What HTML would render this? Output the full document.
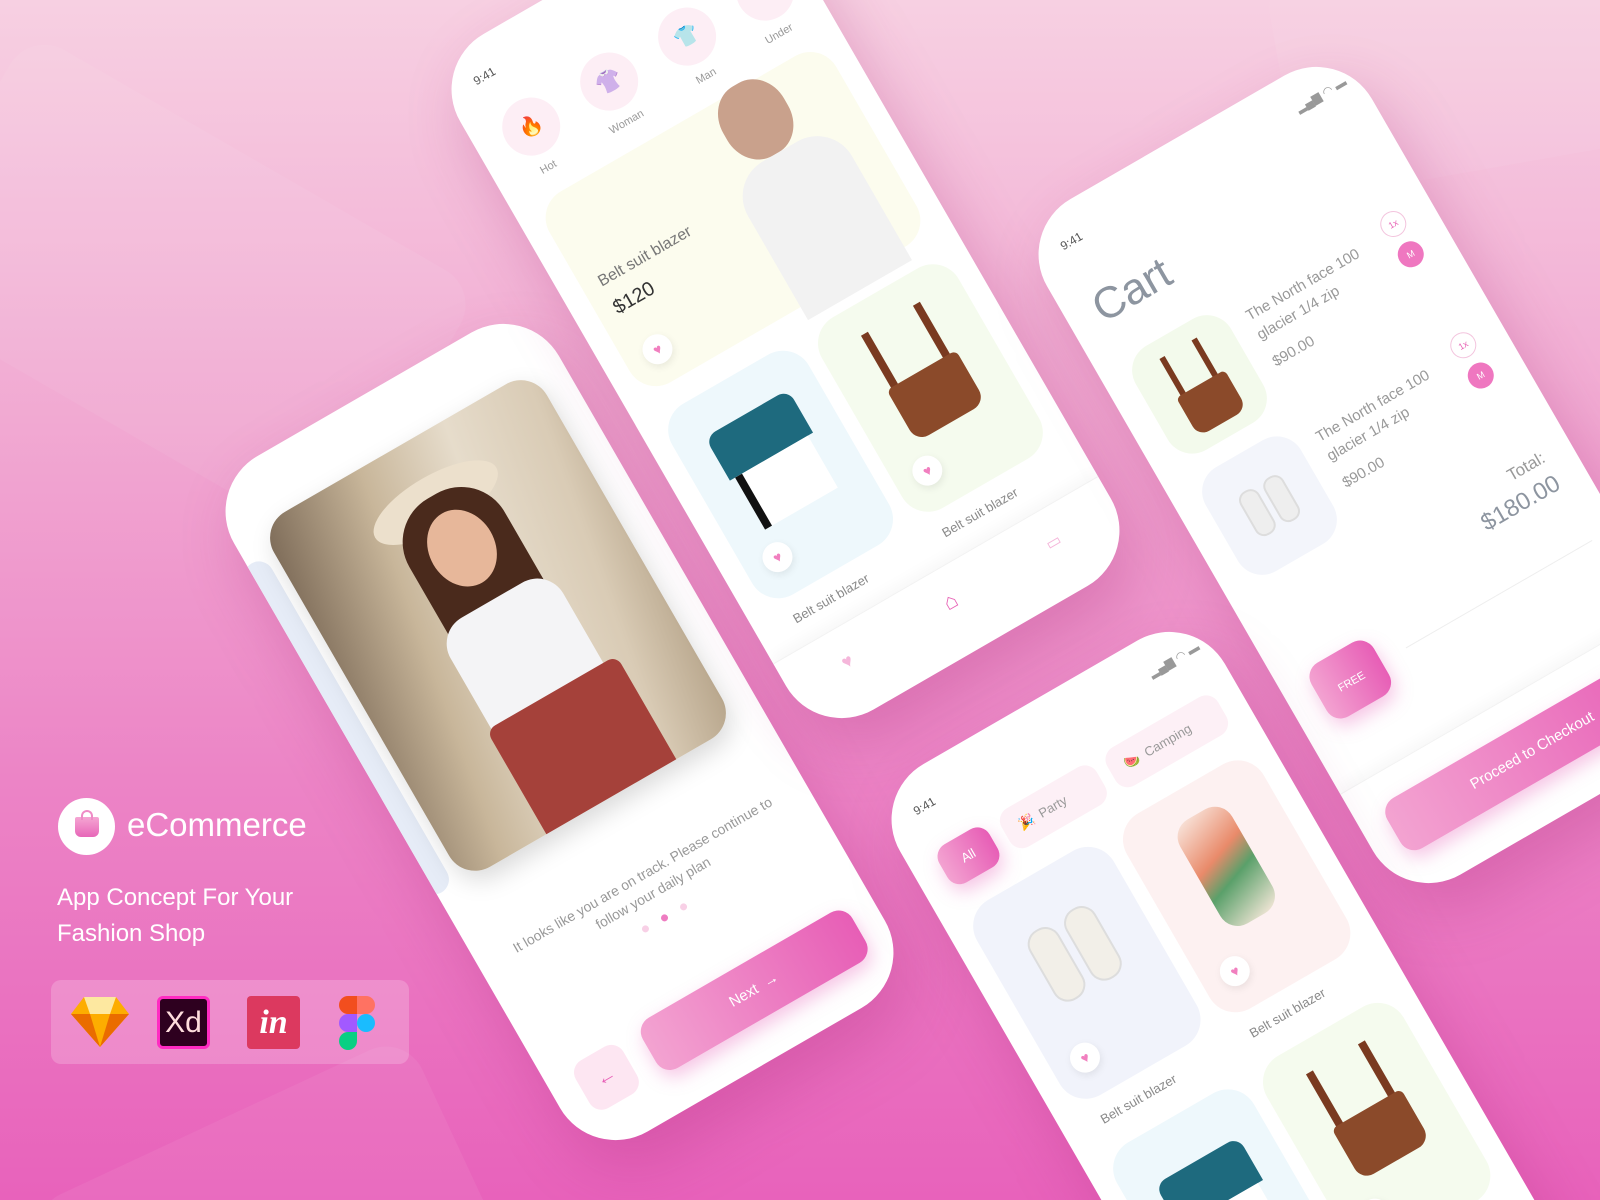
<!DOCTYPE html>
<html><head><meta charset="utf-8">
<style>
*{margin:0;padding:0;box-sizing:border-box}
html,body{width:1600px;height:1200px;overflow:hidden}
body{font-family:"Liberation Sans","DejaVu Sans",sans-serif}
#frame{position:relative;width:1600px;height:1200px;overflow:hidden;
background:linear-gradient(180deg,#f7d0e2 0%,#f1a9d2 35%,#ec84c6 65%,#e862bb 100%)}
.hex{position:absolute;background:rgba(255,255,255,.06);border-radius:40px}
.phone{position:absolute;width:375px;height:780px;background:#fff;border-radius:64px;transform:rotate(-30deg);
box-shadow:0 30px 60px rgba(170,40,120,.28);overflow:hidden}
.phone *{position:absolute}
.t941{left:32px;top:30px;font-size:12px;color:#555}
.pinkbtn{background:linear-gradient(90deg,#f3a3d1,#e75eb6);border-radius:16px;color:#fff;box-shadow:0 8px 18px rgba(230,90,180,.35)}
.heart{width:30px;height:30px;border-radius:50%;background:#fff;box-shadow:0 3px 8px rgba(0,0,0,.08);color:#f17fbf;font-size:14px;text-align:center;line-height:30px}
.lbl{font-size:13px;color:#8a8a8a}
</style></head><body><div id="frame">
<div class="hex" style="left:-80px;top:140px;width:520px;height:300px;transform:rotate(30deg)"></div>
<div class="hex" style="left:1280px;top:-60px;width:380px;height:230px;transform:rotate(-10deg)"></div>
<div class="hex" style="left:60px;top:1110px;width:420px;height:260px;transform:rotate(-25deg)"></div>

<div style="position:absolute;left:58px;top:798px;width:57px;height:57px;border-radius:50%;background:#fff"></div>
<div style="position:absolute;left:75px;top:817px;width:24px;height:20px;background:linear-gradient(#f5a6d3,#e766b8);border-radius:2px 2px 6px 6px"></div>
<div style="position:absolute;left:81px;top:810px;width:12px;height:10px;border:2px solid #ef8bc6;border-bottom:none;border-radius:6px 6px 0 0"></div>
<div style="position:absolute;left:127px;top:806px;font-size:33px;color:#fff">eCommerce</div>
<div style="position:absolute;left:57px;top:880px;font-size:24px;color:#fff;line-height:36px">App Concept For Your<br>Fashion Shop</div>
<div style="position:absolute;left:51px;top:980px;width:358px;height:84px;border-radius:10px;background:rgba(255,255,255,.2)"></div>
<svg style="position:absolute;left:70px;top:995px" width="60" height="54" viewBox="0 0 60 54"><polygon points="14,2 46,2 59,19 30,52 1,19" fill="#fdad00"/><polygon points="14,2 46,2 40,19 20,19" fill="#fde8a0"/><polygon points="1,19 20,19 30,52" fill="#ea6c00"/><polygon points="59,19 40,19 30,52" fill="#ea6c00"/></svg>
<div style="position:absolute;left:157px;top:996px;width:53px;height:53px;border-radius:6px;background:#2e001f;border:3px solid #ff2bc2;color:#fdd;font-size:30px;text-align:center;line-height:47px">Xd</div>
<div style="position:absolute;left:247px;top:996px;width:53px;height:53px;border-radius:4px;background:#dc395f;color:#fff;font:italic bold 34px 'Liberation Serif',serif;text-align:center;line-height:53px">in</div>
<svg style="position:absolute;left:339px;top:996px" width="36" height="54" viewBox="0 0 36 54"><path d="M9 0h9v18H9a9 9 0 0 1 0-18z" fill="#f24e1e"/><path d="M18 0h9a9 9 0 0 1 0 18h-9z" fill="#ff7262"/><path d="M9 18h9v18H9a9 9 0 0 1 0-18z" fill="#a259ff"/><circle cx="27" cy="27" r="9" fill="#1abcfe"/><path d="M9 36h9v9a9 9 0 1 1-9-9z" fill="#0acf83"/></svg>

<div class="phone" style="left:372px;top:342px">
  <div style="left:-10px;top:90px;width:30px;height:380px;background:#e6ecf7;border-radius:20px"></div>
  <div style="left:30px;top:62px;width:315px;height:410px;border-radius:30px;overflow:hidden;background:linear-gradient(100deg,#7d6b58 0%,#c8b69a 30%,#e6dccb 55%,#d9cbb5 80%,#b7a58b 100%);box-shadow:0 10px 25px rgba(0,0,0,.15)">
    <div style="left:95px;top:40px;width:140px;height:55px;border-radius:50%;background:#ece0cc"></div>
    <div style="left:110px;top:60px;width:110px;height:260px;border-radius:50px;background:#4a2a1c"></div>
    <div style="left:132px;top:80px;width:66px;height:80px;border-radius:50%;background:#e7b79a"></div>
    <div style="left:100px;top:180px;width:130px;height:120px;border-radius:30px 30px 10px 10px;background:#f4f4f6"></div>
    <div style="left:95px;top:290px;width:150px;height:130px;background:#a5413a;border-radius:10px"></div>
  </div>
  <div style="left:38px;top:545px;width:300px;text-align:center;font-size:14px;line-height:21px;color:#999">It looks like you are on track. Please continue to follow your daily plan</div>
  <div style="left:160px;top:600px;width:7px;height:7px;border-radius:50%;background:#f8d0e6"></div>
  <div style="left:182px;top:600px;width:7px;height:7px;border-radius:50%;background:#ee7cc1"></div>
  <div style="left:204px;top:600px;width:7px;height:7px;border-radius:50%;background:#f8d0e6"></div>
  <div style="left:28px;top:685px;width:55px;height:55px;border-radius:14px;background:#fde6f2;color:#e75eb6;font-size:20px;text-align:center;line-height:55px">←</div>
  <div class="pinkbtn" style="left:106px;top:682px;width:242px;height:58px;font-size:15px;text-align:center;line-height:58px">Next &nbsp;→</div>
</div>

<div class="phone" style="left:598px;top:-80px">
  <div class="t941">9:41</div>
  <div style="left:30px;top:75px;width:58px;height:58px;border-radius:50%;background:#fdeef5;text-align:center;line-height:58px;font-size:20px">🔥</div>
  <div style="left:45px;top:142px;font-size:11px;color:#999">Hot</div>
  <div style="left:120px;top:75px;width:58px;height:58px;border-radius:50%;background:#fdeef5;color:#e880c8;text-align:center;line-height:58px;font-size:22px">👚</div>
  <div style="left:125px;top:142px;font-size:11px;color:#999">Woman</div>
  <div style="left:210px;top:75px;width:58px;height:58px;border-radius:50%;background:#fdeef5;text-align:center;line-height:58px;font-size:20px">👕</div>
  <div style="left:225px;top:142px;font-size:11px;color:#999">Man</div>
  <div style="left:300px;top:75px;width:58px;height:58px;border-radius:50%;background:#fdeef5"></div>
  <div style="left:305px;top:142px;font-size:11px;color:#999">Under</div>
  <div style="left:22px;top:175px;width:331px;height:220px;border-radius:30px;background:#fcfcee">
    <div style="left:18px;top:90px;font-size:16px;color:#777">Belt suit blazer</div>
    <div style="left:18px;top:118px;font-size:20px;color:#333">$120</div>
    <div class="heart" style="left:20px;top:170px">♥</div>
    <div style="left:200px;top:-5px;width:70px;height:80px;border-radius:45%;background:#c9a18c"></div>
    <div style="left:180px;top:75px;width:120px;height:160px;border-radius:40px 40px 0 0;background:#f2f2f2"></div>
  </div>
  <div style="left:22px;top:420px;width:158px;height:220px;border-radius:30px;background:#eef8fc">
    <div style="left:32px;top:40px;width:96px;height:50px;background:#1e6a7e;border-radius:12px 12px 0 0"></div>
    <div style="left:38px;top:90px;width:84px;height:60px;background:#fff;border-left:8px solid #111"></div>
    <div class="heart" style="left:20px;top:165px">♥</div>
  </div>
  <div style="left:195px;top:420px;width:158px;height:220px;border-radius:30px;background:#f5fbee">
    <div style="left:45px;top:30px;width:8px;height:70px;background:#7a3a20"></div>
    <div style="left:105px;top:30px;width:8px;height:70px;background:#7a3a20"></div>
    <div style="left:40px;top:90px;width:80px;height:60px;background:#8b4a2a;border-radius:6px 6px 14px 14px"></div>
    <div class="heart" style="left:20px;top:165px">♥</div>
  </div>
  <div class="lbl" style="left:40px;top:655px">Belt suit blazer</div>
  <div class="lbl" style="left:212px;top:655px">Belt suit blazer</div>
  <div style="left:0;top:690px;width:375px;height:90px;border-top:1px solid #f2f2f2;box-shadow:0 -6px 14px rgba(0,0,0,.03)"></div>
  <div style="left:60px;top:715px;color:#f5b6da;font-size:18px">♥</div>
  <div style="left:178px;top:712px;color:#e864b6;font-size:22px">⌂</div>
  <div style="left:296px;top:715px;color:#f5b6da;font-size:16px">▭</div>
</div>

<div class="phone" style="left:1185px;top:85px">
  <div class="t941">9:41</div>
  <div style="left:305px;top:28px;font-size:12px;color:#999">▂▄▆ ◠ ▬</div>
  <div style="left:30px;top:85px;font-size:44px;color:#8d95a0;font-weight:300">Cart</div>
  <div style="left:28px;top:165px;width:110px;height:120px;border-radius:28px;background:#f3faec">
    <div style="left:33px;top:18px;width:6px;height:50px;background:#7a3a20"></div>
    <div style="left:70px;top:18px;width:6px;height:50px;background:#7a3a20"></div>
    <div style="left:28px;top:60px;width:56px;height:45px;background:#8b4a2a;border-radius:5px 5px 12px 12px"></div>
  </div>
  <div style="left:158px;top:180px;font-size:15px;line-height:22px;color:#999;width:150px">The North face 100 glacier 1/4 zip</div>
  <div style="left:158px;top:235px;font-size:15px;color:#999">$90.00</div>
  <div style="left:318px;top:170px;width:26px;height:26px;border-radius:50%;border:1px solid #f3c5de;font-size:9px;color:#e864b6;text-align:center;line-height:24px">1x</div>
  <div style="left:318px;top:205px;width:26px;height:26px;border-radius:50%;background:#ef77c0;font-size:9px;color:#fff;text-align:center;line-height:26px">M</div>
  <div style="left:28px;top:305px;width:110px;height:120px;border-radius:28px;background:#f3f5fb">
    <div style="left:30px;top:35px;width:22px;height:50px;border-radius:10px;background:#eee;border:2px solid #ddd"></div>
    <div style="left:58px;top:35px;width:22px;height:50px;border-radius:10px;background:#eee;border:2px solid #ddd"></div>
  </div>
  <div style="left:158px;top:320px;font-size:15px;line-height:22px;color:#999;width:150px">The North face 100 glacier 1/4 zip</div>
  <div style="left:158px;top:375px;font-size:15px;color:#999">$90.00</div>
  <div style="left:318px;top:310px;width:26px;height:26px;border-radius:50%;border:1px solid #f3c5de;font-size:9px;color:#e864b6;text-align:center;line-height:24px">1x</div>
  <div style="left:318px;top:345px;width:26px;height:26px;border-radius:50%;background:#ef77c0;font-size:9px;color:#fff;text-align:center;line-height:26px">M</div>
  <div style="left:265px;top:450px;font-size:17px;color:#999;text-align:right;width:80px">Total:</div>
  <div style="left:215px;top:475px;font-size:24px;color:#8d95a0;text-align:right;width:130px">$180.00</div>
  <div class="pinkbtn" style="left:30px;top:525px;width:72px;height:62px;font-size:11px;text-align:center;padding-top:28px">FREE</div>
  <div style="left:130px;top:556px;width:215px;height:1px;background:#eee"></div>
  <div style="left:0;top:650px;width:375px;height:130px;border-top:1px solid #f2f2f2;box-shadow:0 -6px 14px rgba(0,0,0,.03)"></div>
  <div class="pinkbtn" style="left:28px;top:680px;width:320px;height:58px;font-size:15px;text-align:center;line-height:58px">Proceed to Checkout</div>
</div>

<div class="phone" style="left:1038px;top:650px">
  <div class="t941">9:41</div>
  <div style="left:305px;top:28px;font-size:12px;color:#999">▂▄▆ ◠ ▬</div>
  <div class="pinkbtn" style="left:28px;top:80px;width:58px;height:44px;font-size:13px;text-align:center;line-height:44px;border-radius:14px">All</div>
  <div style="left:100px;top:80px;width:110px;height:44px;border-radius:14px;background:#fdf0f6;font-size:13px;color:#999;line-height:44px;padding-left:16px">🎉 &nbsp;Party</div>
  <div style="left:222px;top:80px;width:128px;height:44px;border-radius:14px;background:#fdf0f6;font-size:13px;color:#999;line-height:44px;padding-left:16px">🍉 &nbsp;Camping</div>
  <div style="left:22px;top:150px;width:158px;height:225px;border-radius:30px;background:#f1f3fb">
    <div style="left:40px;top:50px;width:34px;height:80px;border-radius:16px;background:#f2efe8;border:2px solid #ddd"></div>
    <div style="left:82px;top:50px;width:34px;height:80px;border-radius:16px;background:#f2efe8;border:2px solid #ddd"></div>
    <div class="heart" style="left:20px;top:170px">♥</div>
  </div>
  <div style="left:195px;top:150px;width:158px;height:225px;border-radius:30px;background:#fdf1f1">
    <div style="left:50px;top:30px;width:60px;height:120px;border-radius:20px;background:linear-gradient(160deg,#f9e8e0,#e98a6a 40%,#5aa06a 60%,#fbeadd)"></div>
    <div class="heart" style="left:20px;top:170px">♥</div>
  </div>
  <div class="lbl" style="left:40px;top:390px">Belt suit blazer</div>
  <div class="lbl" style="left:212px;top:390px">Belt suit blazer</div>
  <div style="left:22px;top:430px;width:158px;height:225px;border-radius:30px;background:#eef8fc">
    <div style="left:32px;top:50px;width:96px;height:50px;background:#1e6a7e;border-radius:12px 12px 0 0"></div>
    <div style="left:38px;top:100px;width:84px;height:60px;background:#fff;border-left:8px solid #111"></div>
  </div>
  <div style="left:195px;top:430px;width:158px;height:225px;border-radius:30px;background:#f5fbee">
    <div style="left:45px;top:30px;width:8px;height:70px;background:#7a3a20"></div>
    <div style="left:105px;top:30px;width:8px;height:70px;background:#7a3a20"></div>
    <div style="left:40px;top:90px;width:80px;height:60px;background:#8b4a2a;border-radius:6px 6px 14px 14px"></div>
    <div class="heart" style="left:20px;top:170px">♥</div>
  </div>
  <div class="lbl" style="left:212px;top:670px">Belt suit blazer</div>
</div>
</div></body></html>
